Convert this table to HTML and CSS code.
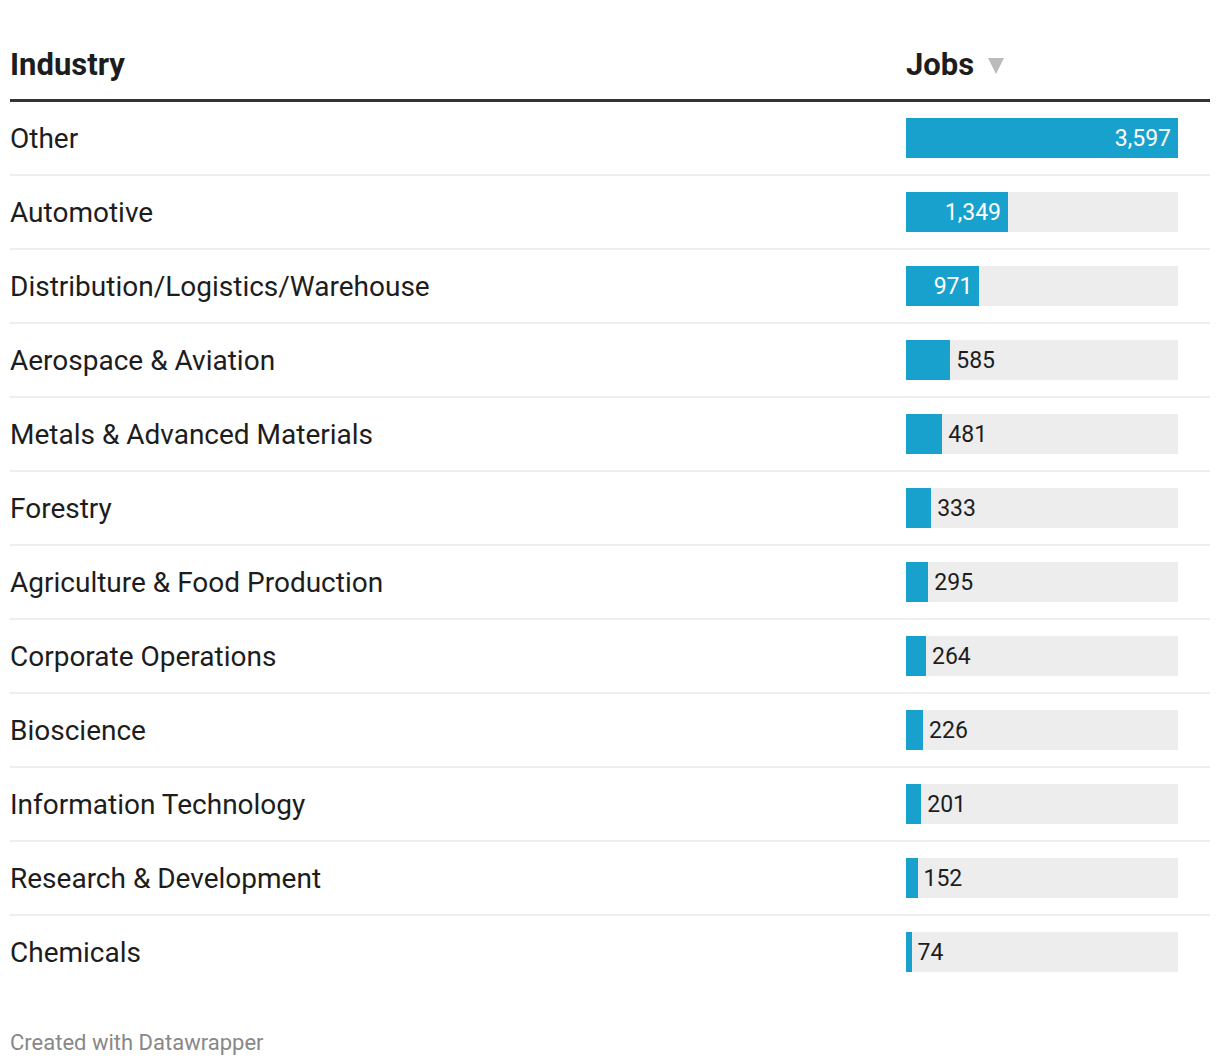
FILE: index.html
```html
<!DOCTYPE html>
<html>
<head>
<meta charset="utf-8">
<link rel="stylesheet" href="styles.css">
</head>
<body>
<div class="chart">
  <div class="head">
    <div class="col-name">Industry</div>
    <div class="col-jobs">Jobs<svg class="sort" width="16" height="16" viewBox="0 0 16 16"><polygon points="0,0 16,0 8,16" fill="#bbbbbb"/></svg></div>
  </div>
  <div class="row"><div class="col-name">Other</div><div class="col-jobs"><div class="track"><div class="bar in" style="width:100%"><span>3,597</span></div></div></div></div>
  <div class="row"><div class="col-name">Automotive</div><div class="col-jobs"><div class="track"><div class="bar in" style="width:37.5%"><span>1,349</span></div></div></div></div>
  <div class="row"><div class="col-name">Distribution/Logistics/Warehouse</div><div class="col-jobs"><div class="track"><div class="bar in" style="width:27%"><span>971</span></div></div></div></div>
  <div class="row"><div class="col-name">Aerospace &amp; Aviation</div><div class="col-jobs"><div class="track"><div class="bar" style="width:16.26%"></div><span class="out">585</span></div></div></div>
  <div class="row"><div class="col-name">Metals &amp; Advanced Materials</div><div class="col-jobs"><div class="track"><div class="bar" style="width:13.37%"></div><span class="out">481</span></div></div></div>
  <div class="row"><div class="col-name">Forestry</div><div class="col-jobs"><div class="track"><div class="bar" style="width:9.26%"></div><span class="out">333</span></div></div></div>
  <div class="row"><div class="col-name">Agriculture &amp; Food Production</div><div class="col-jobs"><div class="track"><div class="bar" style="width:8.2%"></div><span class="out">295</span></div></div></div>
  <div class="row"><div class="col-name">Corporate Operations</div><div class="col-jobs"><div class="track"><div class="bar" style="width:7.34%"></div><span class="out">264</span></div></div></div>
  <div class="row"><div class="col-name">Bioscience</div><div class="col-jobs"><div class="track"><div class="bar" style="width:6.28%"></div><span class="out">226</span></div></div></div>
  <div class="row"><div class="col-name">Information Technology</div><div class="col-jobs"><div class="track"><div class="bar" style="width:5.59%"></div><span class="out">201</span></div></div></div>
  <div class="row"><div class="col-name">Research &amp; Development</div><div class="col-jobs"><div class="track"><div class="bar" style="width:4.23%"></div><span class="out">152</span></div></div></div>
  <div class="row last"><div class="col-name">Chemicals</div><div class="col-jobs"><div class="track"><div class="bar" style="width:2.06%"></div><span class="out">74</span></div></div></div>
  <div class="footer">Created with Datawrapper</div>
</div>
</body>
</html>
```
FILE: styles.css
```css
html, body {
  margin: 0;
  padding: 0;
  background: #fff;
}
body {
  font-family: Roboto, "Liberation Sans", sans-serif;
  color: #1d1d1d;
}
.chart {
  width: 1200px;
  padding: 0 10px;
}
.head {
  display: flex;
  align-items: flex-end;
  height: 102px;
  box-sizing: border-box;
  padding-bottom: 19px;
  border-bottom: 3px solid #333;
  font-weight: 700;
  font-size: 31px;
  line-height: 30px;
}
.col-name {
  flex: 0 0 896px;
}
.col-jobs {
  flex: 1;
}
.head .col-jobs {
  display: flex;
  align-items: flex-start;
}
.sort {
  margin-left: 14px;
  margin-top: 8px;
}
.row {
  display: flex;
  align-items: center;
  padding: 16px 0;
  border-bottom: 2px solid #eee;
  font-size: 28px;
}
.row.last {
  border-bottom: none;
}
.track {
  position: relative;
  width: 272px;
  height: 40px;
  background: #ededed;
  display: flex;
  align-items: center;
}
.bar {
  height: 40px;
  background: #19a1cd;
  display: flex;
  align-items: center;
  justify-content: flex-end;
}
.bar span {
  color: #fff;
  font-size: 23px;
  padding-right: 7px;
}
.out {
  font-size: 23px;
  padding-left: 6px;
  color: #1d1d1d;
}
.footer {
  margin-top: 42px;
  font-size: 22px;
  color: #888;
}
```
